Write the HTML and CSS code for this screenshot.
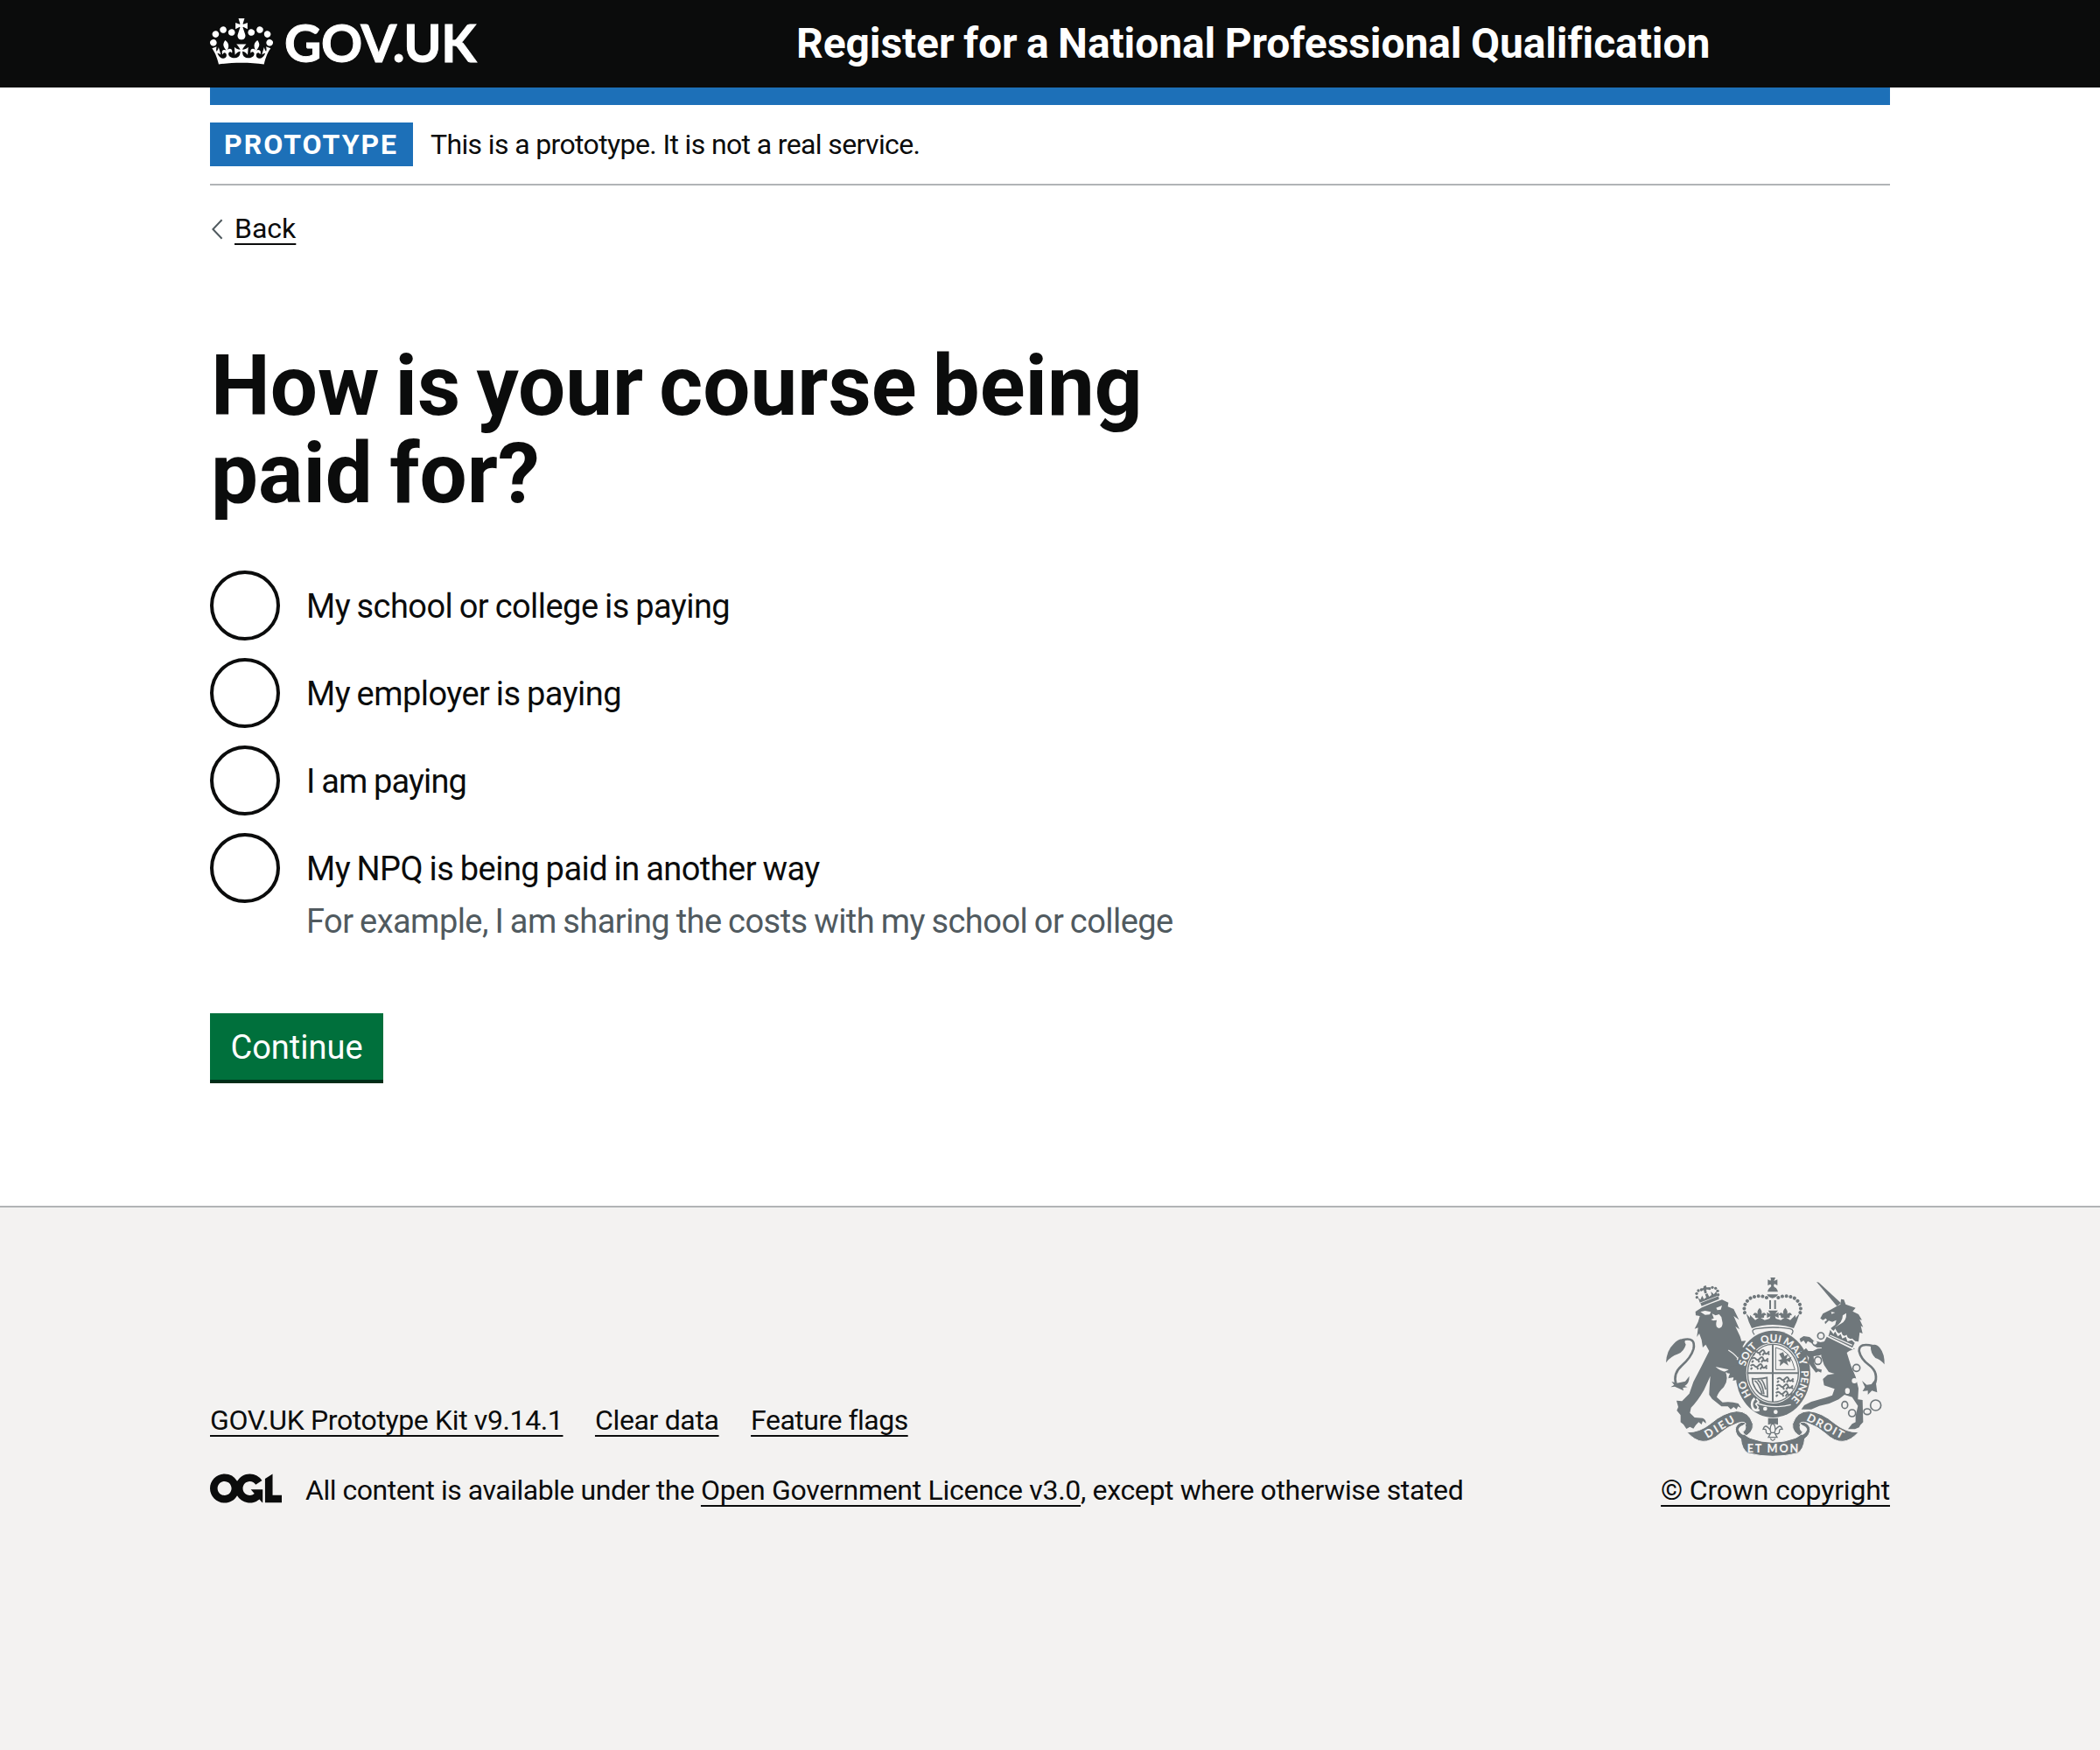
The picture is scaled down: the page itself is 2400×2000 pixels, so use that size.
FILE: index.html
```html
<!DOCTYPE html>
<html lang="en">
<head>
<meta charset="utf-8">
<title>How is your course being paid for?</title>
<link rel="stylesheet" href="styles.css">
</head>
<body>
<header class="header">
  <div class="container header-inner">
    <a class="logo" href="#">
      <svg class="logo-crown" viewBox="0 0 132 97" aria-hidden="true"><path fill="currentColor" fill-rule="evenodd" d="M25 30.2c3.5 1.5 7.7-.2 9.1-3.7 1.5-3.6-.2-7.8-3.9-9.2-3.6-1.4-7.6.3-9.1 3.9-1.4 3.5.3 7.5 3.9 9zM9 39.5c3.6 1.5 7.8-.2 9.2-3.7 1.5-3.6-.2-7.8-3.9-9.1-3.6-1.5-7.6.2-9.1 3.8-1.4 3.5.3 7.5 3.8 9zM4.4 57.2c3.5 1.5 7.7-.2 9.1-3.8 1.5-3.6-.2-7.7-3.9-9.1-3.5-1.5-7.6.3-9.1 3.8-1.4 3.5.3 7.6 3.9 9.1zm38.3-21.4c3.5 1.5 7.7-.2 9.1-3.8 1.5-3.6-.2-7.7-3.9-9.1-3.6-1.5-7.6.3-9.1 3.8-1.3 3.6.4 7.7 3.9 9.1zm64.4-5.6c-3.6 1.5-7.8-.2-9.1-3.7-1.5-3.6.2-7.8 3.8-9.2 3.6-1.4 7.7.3 9.2 3.9 1.3 3.5-.4 7.5-3.9 9zm15.9 9.3c-3.6 1.5-7.7-.2-9.1-3.7-1.5-3.6.2-7.8 3.7-9.1 3.6-1.5 7.7.2 9.2 3.8 1.5 3.5-.3 7.5-3.8 9zm4.7 17.7c-3.6 1.5-7.8-.2-9.2-3.8-1.5-3.6.2-7.7 3.9-9.1 3.6-1.5 7.7.3 9.2 3.8 1.3 3.5-.4 7.6-3.9 9.1zM89.3 35.8c-3.6 1.5-7.8-.2-9.2-3.8-1.4-3.6.2-7.7 3.9-9.1 3.6-1.5 7.7.3 9.2 3.8 1.4 3.6-.3 7.7-3.9 9.1zM69.7 17.7l8.9 4.7V9.3l-8.9 2.8c-.2-.3-.5-.6-.9-.9L72.4 0H59.6l3.5 11.2c-.3.3-.6.5-.9.9l-8.8-2.8v13.1l8.8-4.7c.3.3.6.7.9.9l-5 15.4v.1c-.2.8-.4 1.6-.4 2.4 0 4.1 3.1 7.5 7 8.1h.2c.3 0 .7.1 1 .1.4 0 .7 0 1-.1h.2c4-.6 7.1-4.1 7.1-8.1 0-.8-.1-1.7-.4-2.4V34l-5.1-15.4c.4-.2.7-.6 1-.9zM66 92.8c16.9 0 32.8 1.1 47.1 3.2 4-16.9 8.9-26.7 14-33.5l-9.6-3.4c1 4.9 1.1 7.2 0 10.2-1.5-1.4-3-4.3-4.2-8.7L108.6 76c2.8-2 5-3.2 7.5-3.3-4.4 9.4-10 11.9-13.6 11.2-4.3-.8-6.3-4.6-5.6-7.9 1-4.7 5.7-5.9 8-.5 4.3-8.7-3-11.4-7.6-8.8 7.1-7.2 7.9-13.5 2.1-21.1-8 6.1-8.1 12.3-4.5 20.8-4.7-5.4-12.1-2.5-9.5 6.2 3.4-5.2 7.9-2 7.2 3.1-.6 4.3-6.4 7.8-13.5 7.2-10.3-.9-10.9-8-11.2-13.8 2.5-.5 7.1 1.8 11 7.3L80.2 60c-4.1 4.4-8 5.3-12.3 5.4 1.4-4.4 8-11.6 8-11.6H55.5s6.4 7.2 7.9 11.6c-4.2-.1-8-1-12.3-5.4l1.4 16.4c3.9-5.5 8.5-7.7 10.9-7.3-.3 5.8-.9 12.8-11.1 13.8-7.2.6-12.9-2.9-13.5-7.2-.7-5 3.8-8.3 7.1-3.1 2.7-8.7-4.6-11.6-9.4-6.2 3.7-8.5 3.6-14.7-4.6-20.8-5.8 7.6-5 13.9 2.2 21.1-4.7-2.6-11.9.1-7.7 8.8 2.3-5.5 7.1-4.2 8.1.5.7 3.3-1.3 7.1-5.7 7.9-3.5.7-9-1.8-13.5-11.2 2.5.1 4.7 1.3 7.5 3.3l-4.7-15.4c-1.2 4.4-2.7 7.2-4.3 8.7-1.1-3-.9-5.3 0-10.2l-9.5 3.4c5 6.9 9.9 16.7 14 33.5 14.8-2.1 30.8-3.2 47.7-3.2z"/></svg>
      <span class="logo-text">GOV.UK</span>
    </a>
    <a class="service-name" href="#">Register for a National Professional Qualification</a>
  </div>
</header>

<div class="container">
  <div class="phase-banner">
    <strong class="tag">PROTOTYPE</strong>
    <span class="phase-text">This is a prototype. It is not a real service.</span>
  </div>
  <a class="back-link" href="#">
    <svg class="back-arrow" viewBox="0 0 14 24" aria-hidden="true"><path d="M12.6 1.2 2.4 12l10.2 10.8" fill="none" stroke="#505a5f" stroke-width="2"/></svg>
    <span class="link">Back</span>
  </a>
  <main class="main">
    <h1 class="heading"><span class="heading-line">How is your course being</span> <span class="heading-line heading-line-last">paid for?</span></h1>
    <form>
      <div class="radios">
        <label class="radio"><span class="radio-ring"></span><span class="radio-label">My school or college is paying</span></label>
        <label class="radio"><span class="radio-ring"></span><span class="radio-label">My employer is paying</span></label>
        <label class="radio"><span class="radio-ring"></span><span class="radio-label radio-label-tight">I am paying</span></label>
        <label class="radio"><span class="radio-ring"></span><span class="radio-label">My NPQ is being paid in another way</span></label>
        <div class="hint">For example, I am sharing the costs with my school or college</div>
      </div>
      <button class="button" type="button">Continue</button>
    </form>
  </main>
</div>

<footer class="footer">
  <div class="container footer-inner">
    <div class="footer-meta">
      <nav class="footer-links">
        <a class="link kit" href="#">GOV.UK Prototype Kit v9.14.1</a>
        <a class="link clear" href="#">Clear data</a>
        <a class="link flags" href="#">Feature flags</a>
      </nav>
      <div class="licence">
        <svg class="ogl" viewBox="0 0 483.2 195.7" aria-hidden="true"><path fill="currentColor" d="M421.5 142.8V.1l-50.7 32.3v161.1h112.4v-50.7zm-122.3-9.6A47.12 47.12 0 0 1 221 97.8c0-26 21.1-47.1 47.1-47.1 16.7 0 31.4 8.7 39.7 21.8l42.7-27.2A97.63 97.63 0 0 0 268.1 0c-36.5 0-68.3 20.1-85.1 49.7A98 98 0 0 0 97.8 0C43.9 0 0 43.9 0 97.8s43.9 97.8 97.8 97.8c36.5 0 68.3-20.1 85.1-49.7a97.76 97.76 0 0 0 149.6 25.4l19.4 22.2h3v-87.8h-80l24.3 27.5zM97.8 145c-26 0-47.1-21.1-47.1-47.1s21.1-47.1 47.1-47.1 47.1 21.1 47.1 47.1S123.8 145 97.8 145"/></svg>
        <p class="licence-text"><span class="licence-lead">All content is available under the </span><a class="link licence-link" href="#">Open Government Licence v3.0</a><span class="licence-tail">, except where otherwise stated</span></p>
      </div>
    </div>
    <a class="crown-copyright" href="#">
      <svg class="arms" viewBox="42 60 750 612" aria-hidden="true">
        <defs>
          <path id="garter" pathLength="360" d="M409 502A97 111 0 0 1 409 280A97 111 0 0 1 409 502"/>
          <g id="lions" fill="none" stroke="#6f777b" stroke-width="6">
            <path d="M2 8q8-8 14 0t14-2 12 3 16-3M8 14l-6 6M24 12l4 8M40 12l-5 8M52 10l6 8"/>
          </g>
          <g id="fleur">
            <path d="M0-22q-13 14-4 24h8q9-10-4-24zM-5 0q-14-12-18 4q5-3 8 2q-3 8 8 6h14q11 2 8-6q3-5 8-2q-4-16-18-4z"/>
          </g>
        </defs>

        <!-- lion -->
        <g fill="#6f777b">
          <path d="M143 177L165 163L195 150L234 136L256 146L254 160L274 168L292 205L274 192L294 238L280 228L296 262L301 278L316 277L304 298L316 302L300 324L284 340L304 362L316 390L320 412L306 404L298 414L288 404L276 412L272 398L256 402L262 388L240 384L258 376L212 366Q226 380 246 384Q258 410 240 436Q222 452 216 470L236 488Q264 484 290 492L300 508L289 502L284 512L274 504L264 512L254 502L232 502L200 476L190 462Q190 446 194 398L172 446Q150 484 128 506L124 524L140 540L168 542Q180 548 179 560L168 552L164 564L154 556L144 566L136 578L124 572L112 579L102 564L92 556L92 532L79 516L84 504L78 482L97 484L122 458L136 418L164 364L190 312L178 290L168 300L164 274L156 252L148 264L152 232L140 236L152 212L158 192L144 190z"/>
          <path d="M42 352Q44 310 68 288Q86 266 108 272Q104 282 110 290Q104 312 84 322Q56 332 42 352z"/>
          <path d="M61 417L80 422L108 416L122 398Q122 424 106 432L116 436L100 438L102 448L86 440L72 434L58 436L70 428z"/>
          <path d="M160 148L222 124L224 134L164 158z"/>
          <path d="M158 146L152 130L160 136L166 122L172 134L180 128L176 118L184 114L190 126L198 120L196 108L206 118L214 108L220 122z"/>
        </g>
        <path d="M98 274Q146 262 136 306Q128 334 96 362Q66 388 76 424" fill="none" stroke="#6f777b" stroke-width="8"/>
        <g fill="#6f777b"><circle cx="148" cy="128" r="5"/><circle cx="147" cy="115" r="5"/><circle cx="153" cy="105" r="5"/><circle cx="163" cy="102" r="5"/><circle cx="191" cy="98" r="5"/><circle cx="201" cy="94" r="5"/><circle cx="212" cy="97" r="5"/><circle cx="219" cy="106" r="5"/><circle cx="221" cy="119" r="5"/><path d="M171 90l8-3 2 7 8 0-1 7-8 0 2 12-8 2-3-12-7 3-2-7 8-3z"/></g>
        <g fill="#f3f2f1">
          <path d="M160 178L176 174L196 178L192 187L176 188zM214 164L234 156L230 170L218 172z"/>
          <path d="M200 184L212 190L224 186L232 196L236 216Q236 232 224 234Q212 232 214 216L216 206L204 208L196 204L206 200z"/>
        </g>
        <path d="M256 309Q284 326 302 356L312 404" fill="none" stroke="#f3f2f1" stroke-width="4"/>

        <!-- royal crown -->
        <g fill="#6f777b">
          <path d="M402 66l-2-6h17l-3 8-2 4 12-5v20l-10-5-3 5 4 10h-16l4-9-3-5-9 4V67l9 4zM390 109q4-17 17-18q15 2 19 18z"/>
          <path d="M388 118h38q-4 10-19 13q-15-3-19-13zM396 138h6v30h-6zM413 138h6v30h-6z"/>
          <path d="M392 173h34l-10 12 12-6v20l-12-6 4 12h-24l4-12-12 6v-20l12 6z"/>
          <use href="#fleur" x="363" y="186"/><use href="#fleur" x="451" y="186"/>
          <path d="M317 184L330 198L330 188L348 206L363 196L380 206L400 200L408 196L416 200L436 206L451 196L468 206L486 188L486 198L500 184L490 212L480 234Q408 210 336 234L326 212z"/>
        </g>
        <path d="M387 129q-28-12-58 3q-26 22-16 52M427 129q28-12 58 3q26 22 16 52" fill="none" stroke="#6f777b" stroke-width="12" stroke-linecap="round" stroke-dasharray="0.1 14.2"/>
        <path d="M345 256q-14-17 5-20q58-10 118 0q16 4 4 20" fill="#f3f2f1" stroke="#6f777b" stroke-width="4"/>

        <!-- garter and shield -->
        <ellipse cx="409" cy="391" rx="128" ry="149" fill="#6f777b"/>
        <ellipse cx="409" cy="388" rx="92" ry="104" fill="#f3f2f1"/>
        <g fill="none" stroke="#6f777b" stroke-width="4">
          <ellipse cx="409" cy="388" rx="87" ry="99"/>
          <path d="M408 290v196M320 388h178" stroke-width="6"/>
        </g>
        <use href="#lions" x="338" y="307"/><use href="#lions" x="334" y="331"/><use href="#lions" x="330" y="355"/>
        <use href="#lions" x="421" y="400"/><use href="#lions" x="419" y="424"/><use href="#lions" x="417" y="448"/>
        <path d="M418 376V300Q470 310 484 376z" fill="none" stroke="#6f777b" stroke-width="3"/>
        <path d="M430 322l14-6 4 14 14-8-8 18 18-8-4 18-12-4 6 16-16-10-14 12 2-16-8-4 14-4z" fill="#6f777b"/>
        <path d="M338 407q30 2 50-4l2 66q-34-4-50-46zM346 414q14 6 26 46M356 412q14 6 22 48M368 410q8 4 16 34" fill="none" stroke="#6f777b" stroke-width="5"/>
        <path d="M352 490Q410 512 470 496" fill="none" stroke="#f3f2f1" stroke-width="4"/>
        <path d="M346 474q-14 14-8 30t24 10" fill="none" stroke="#f3f2f1" stroke-width="8"/>
        <path d="M352 476l8 10-10 8 8 10-6 12" fill="none" stroke="#f3f2f1" stroke-width="5"/>
        <circle cx="382" cy="510" r="7" fill="#f3f2f1"/><circle cx="418" cy="521" r="7" fill="#f3f2f1"/>
        <g class="motto" fill="#f3f2f1">
          <text><textPath href="#garter" startOffset="63">HO</textPath></text>
          <text><textPath href="#garter" startOffset="126">SOIT</textPath></text>
          <text><textPath href="#garter" startOffset="176">QUI</textPath></text>
          <text><textPath href="#garter" startOffset="219">MAL</textPath></text>
          <text><textPath href="#garter" startOffset="248">Y</textPath></text>
          <text><textPath href="#garter" startOffset="293">PENSE</textPath></text>
        </g>
        <path d="M262 366l30-6 20 26 7 24-16 2-8 12-8-14-16 4 4-12-20 4 10-16-14-2z" fill="#6f777b"/>

        <!-- unicorn -->
        <g fill="#6f777b">
          <path d="M558 75L566 77L642 148L628 158z"/>
          <path d="M571 200L580 184L604 172L628 158L640 152L642 134L652 136L658 152L692 164L682 176L702 186L714 206L706 204L718 230L710 226L716 252L706 248L702 280L690 278L604 236L622 222L626 206L612 212L600 208L588 220L586 212L594 206L590 200L580 206z"/>
          <path d="M594 262L690 304L670 312L662 318L676 362L692 400L702 440L700 478L716 480L718 556L708 566L704 574L690 580H666L680 562L692 556V534L700 500L680 470L654 462L634 478L602 492L568 500L540 512H506L516 498L540 486L590 472L612 464L620 442L584 430L580 408L596 394L620 390L600 384L584 360L574 330L576 296z"/>
          <path d="M500 270L514 261L534 264L548 276L572 282L590 278L584 300L560 300L548 294L540 284L528 278L522 288L514 276L504 282zM500 316L514 310L522 302L530 312L546 312L562 304L584 302L586 322L566 328L548 330L550 354L560 372L576 376L574 386L564 382L556 386L542 368L530 352L532 334L518 322L506 324z"/>
          <path d="M791 358Q776 340 760 336Q742 318 744 294Q762 284 776 302Q792 322 791 358z"/>
          <path d="M766 454L748 448L734 462V448L716 450L724 436L714 414L730 428L746 426L760 408z"/>
        </g>
        <path d="M752 295Q704 282 704 312Q710 340 738 360Q774 386 756 430" fill="none" stroke="#6f777b" stroke-width="8"/>
        <path d="M604 234L616 250L622 240L632 258L642 250L648 266L660 260L666 276L680 272L692 284L682 304L596 262z" fill="#6f777b" stroke="#f3f2f1" stroke-width="5"/>
        <path d="M604 258L680 292" stroke="#f3f2f1" stroke-width="4"/>
        <path d="M660 182q2 26-18 36l-22 14q28-18 28-42zM608 178l14 2-12 5z" fill="#f3f2f1"/>
        <g fill="none" stroke="#6f777b" stroke-width="5">
          <circle cx="573" cy="260" r="11" fill="#f3f2f1"/><circle cx="553" cy="283" r="7" stroke="none" fill="#f3f2f1"/><ellipse cx="563" cy="345" rx="12" ry="13" fill="#f3f2f1"/><circle cx="695" cy="370" r="12" fill="#f3f2f1"/><ellipse cx="655" cy="497" rx="10" ry="12"/><circle cx="680" cy="525" r="12"/><ellipse cx="732" cy="520" rx="12" ry="10"/><circle cx="761" cy="498" r="18"/>
        </g>
        <g fill="#f3f2f1"><circle cx="688" cy="414" r="9"/><ellipse cx="664" cy="449" rx="8" ry="10"/></g>

        <!-- ribbon -->
        <g fill="#6f777b" stroke="#f3f2f1" stroke-width="3">
          <path id="ribbon-side" d="M114 590Q156 592 196 560Q240 522 284 518Q326 518 340 562Q344 592 306 608Q296 604 296 596Q322 584 312 562Q300 552 282 562Q256 570 228 594Q196 624 168 622Q140 620 114 590z"/>
          <use href="#ribbon-side" transform="matrix(-1 0 0 1 816 0)"/>
          <path d="M280 580Q280 566 300 556Q314 554 316 562Q302 566 302 580Q304 598 330 610Q408 640 486 610Q512 598 514 580Q514 566 500 562Q502 554 516 556Q536 566 536 580Q536 600 518 612Q514 650 494 662Q408 684 322 662Q302 650 298 612Q280 600 280 580z"/>
        </g>
        <path d="M392 542h34v23q-18-6-34 0z" fill="#6f777b"/>
        <path d="M290 582Q292 568 310 566Q296 584 312 600Q298 600 290 582zM526 582Q524 568 506 566Q520 584 504 600Q518 600 526 582z" fill="#f3f2f1"/>
        <path d="M408 558q-14 16-6 34h12q8-18-6-34zM400 584q-18-26-25-4 12-2 10 10 4 10 16 4l-8 14h30l-8-14q12 6 16-4-2-12 10-10-7-22-25 4M400 612q8 14 16 0" fill="#f3f2f1" stroke="#6f777b" stroke-width="4"/>
        <g class="ribbon-text" fill="#f3f2f1">
          <text transform="translate(184 612) rotate(-31)" textLength="112">DIEU</text>
          <text x="320" y="659" textLength="176">ET MON</text>
          <text transform="translate(522 549) rotate(28)" textLength="138">DROIT</text>
        </g>
      </svg>
      <span class="link crown-text">© Crown copyright</span>
    </a>
  </div>
</footer>
</body>
</html>
```
FILE: styles.css
```css
* { box-sizing: border-box; }

body {
  margin: 0;
  min-height: 2000px;
  display: flex;
  flex-direction: column;
  background: #fff;
  color: #0b0c0c;
  font-family: Roboto, "Liberation Sans", sans-serif;
  font-size: 32px;
}

a { color: inherit; text-decoration: none; }

.container { width: 1920px; margin: 0 auto; }

.link {
  text-decoration: underline;
  text-decoration-thickness: 2px;
  text-underline-offset: 6px;
  text-decoration-skip-ink: none;
}

/* Header */
.header { height: 100px; background: #0b0c0c; color: #fff; }

.header-inner {
  display: flex;
  height: 120px;
  border-bottom: 20px solid #1d70b8;
}

.logo { display: flex; width: 670px; padding-top: 21px; }
.logo-crown { width: 72px; height: 53px; }
.logo-text {
  margin-left: 13px;
  font: 700 58.5px/54px Lato, sans-serif;
  letter-spacing: -0.4px;
  -webkit-text-stroke: 1px #fff;
}

.service-name {
  padding-top: 25px;
  font-size: 48px;
  font-weight: 700;
  line-height: 50px;
  letter-spacing: -0.1px;
  word-spacing: -1.3px;
  white-space: nowrap;
}

/* Phase banner */
.phase-banner {
  display: flex;
  gap: 20px;
  margin-top: 20px;
  padding: 20px 0;
  border-bottom: 2px solid #b1b4b6;
  line-height: 50px;
}

.tag {
  width: 232px;
  padding-left: 16px;
  background: #1d70b8;
  color: #fff;
  letter-spacing: 2px;
}

.phase-text { letter-spacing: -0.63px; }

.back-link {
  display: flex;
  gap: 13px;
  width: max-content;
  margin-top: 29px;
  line-height: 40px;
}
.back-arrow { width: 14px; height: 24px; margin: 9px 0 0 1px; }

/* Question */
.main { padding-top: 110px; }

.heading {
  margin: 0 0 61px 1px;
  font-size: 96px;
  line-height: 100px;
}
.heading-line { display: block; word-spacing: -5.75px; }
.heading-line-last { word-spacing: -4.5px; }

.radios { font-size: 38px; line-height: 50px; }
.radio { display: flex; gap: 30px; height: 80px; margin-bottom: 20px; }
.radio-ring {
  width: 80px;
  height: 80px;
  border: 4px solid #0b0c0c;
  border-radius: 50%;
}
.radio-label {
  padding-top: 16px;
  letter-spacing: -0.55px;
  word-spacing: -1.4px;
}
.radio-label-tight { letter-spacing: -0.9px; word-spacing: -0.8px; }
.hint {
  margin: -24px 0 0 110px;
  color: #505a5f;
  letter-spacing: -0.55px;
  word-spacing: -1.3px;
}

.button {
  display: block;
  width: 198px;
  height: 76px;
  margin: 80px 0 0;
  padding: 2px 0 0;
  border: 0;
  background: #00703c;
  box-shadow: 0 4px 0 #002d18;
  color: #fff;
  font: 400 38px/50px Roboto, sans-serif;
}

/* Footer */
.footer {
  flex: 1;
  margin-top: 144px;
  padding-top: 80px;
  border-top: 2px solid #b1b4b6;
  background: #f3f2f1;
  line-height: 40px;
}
.footer-inner { display: flex; justify-content: space-between; align-items: flex-end; }
.footer-links { display: flex; gap: 36.5px; margin-bottom: 40px; }
.kit { letter-spacing: -0.375px; }
.clear { letter-spacing: -0.35px; }
.flags { letter-spacing: -0.5px; }

.licence { display: flex; }
.ogl { width: 82px; height: 34px; margin: 1px 27px 0 0; }
.licence-text { margin: 0; white-space: pre; }
.licence-lead { letter-spacing: -0.47px; }
.licence-link { letter-spacing: -0.29px; }
.licence-tail { letter-spacing: -0.36px; }

.crown-copyright { display: flex; flex-direction: column; align-items: center; gap: 19px; }
.arms { width: 250px; height: 204px; }
.crown-text { letter-spacing: -0.18px; }
.motto { font: 900 35px Lato, sans-serif; text-anchor: middle; }
.ribbon-text { font: 900 38px Lato, sans-serif; }
```
